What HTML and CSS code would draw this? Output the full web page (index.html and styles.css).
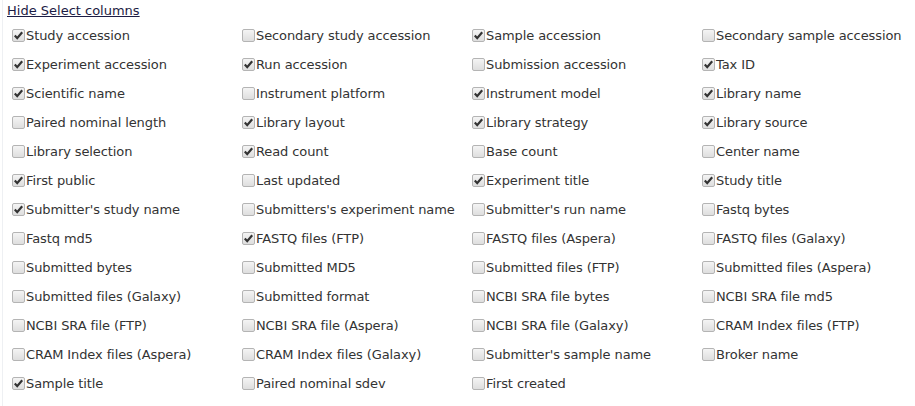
FILE: index.html
```html
<!DOCTYPE html>
<html>
<head>
<meta charset="utf-8">
<link rel="stylesheet" href="styles.css">
</head>
<body>
<div class="panel">
  <a class="toggle" href="#">Hide Select columns</a>
  <div class="grid">
    <label class="opt"><span class="box on"></span>Study accession</label>
    <label class="opt"><span class="box"></span>Secondary study accession</label>
    <label class="opt"><span class="box on"></span>Sample accession</label>
    <label class="opt"><span class="box"></span>Secondary sample accession</label>

    <label class="opt"><span class="box on"></span>Experiment accession</label>
    <label class="opt"><span class="box on"></span>Run accession</label>
    <label class="opt"><span class="box"></span>Submission accession</label>
    <label class="opt"><span class="box on"></span>Tax ID</label>

    <label class="opt"><span class="box on"></span>Scientific name</label>
    <label class="opt"><span class="box"></span>Instrument platform</label>
    <label class="opt"><span class="box on"></span>Instrument model</label>
    <label class="opt"><span class="box on"></span>Library name</label>

    <label class="opt"><span class="box"></span>Paired nominal length</label>
    <label class="opt"><span class="box on"></span>Library layout</label>
    <label class="opt"><span class="box on"></span>Library strategy</label>
    <label class="opt"><span class="box on"></span>Library source</label>

    <label class="opt"><span class="box"></span>Library selection</label>
    <label class="opt"><span class="box on"></span>Read count</label>
    <label class="opt"><span class="box"></span>Base count</label>
    <label class="opt"><span class="box"></span>Center name</label>

    <label class="opt"><span class="box on"></span>First public</label>
    <label class="opt"><span class="box"></span>Last updated</label>
    <label class="opt"><span class="box on"></span>Experiment title</label>
    <label class="opt"><span class="box on"></span>Study title</label>

    <label class="opt"><span class="box on"></span>Submitter's study name</label>
    <label class="opt"><span class="box"></span>Submitters's experiment name</label>
    <label class="opt"><span class="box"></span>Submitter's run name</label>
    <label class="opt"><span class="box"></span>Fastq bytes</label>

    <label class="opt"><span class="box"></span>Fastq md5</label>
    <label class="opt"><span class="box on"></span>FASTQ files (FTP)</label>
    <label class="opt"><span class="box"></span>FASTQ files (Aspera)</label>
    <label class="opt"><span class="box"></span>FASTQ files (Galaxy)</label>

    <label class="opt"><span class="box"></span>Submitted bytes</label>
    <label class="opt"><span class="box"></span>Submitted MD5</label>
    <label class="opt"><span class="box"></span>Submitted files (FTP)</label>
    <label class="opt"><span class="box"></span>Submitted files (Aspera)</label>

    <label class="opt"><span class="box"></span>Submitted files (Galaxy)</label>
    <label class="opt"><span class="box"></span>Submitted format</label>
    <label class="opt"><span class="box"></span>NCBI SRA file bytes</label>
    <label class="opt"><span class="box"></span>NCBI SRA file md5</label>

    <label class="opt"><span class="box"></span>NCBI SRA file (FTP)</label>
    <label class="opt"><span class="box"></span>NCBI SRA file (Aspera)</label>
    <label class="opt"><span class="box"></span>NCBI SRA file (Galaxy)</label>
    <label class="opt"><span class="box"></span>CRAM Index files (FTP)</label>

    <label class="opt"><span class="box"></span>CRAM Index files (Aspera)</label>
    <label class="opt"><span class="box"></span>CRAM Index files (Galaxy)</label>
    <label class="opt"><span class="box"></span>Submitter's sample name</label>
    <label class="opt"><span class="box"></span>Broker name</label>

    <label class="opt"><span class="box on"></span>Sample title</label>
    <label class="opt"><span class="box"></span>Paired nominal sdev</label>
    <label class="opt"><span class="box"></span>First created</label>
  </div>
</div>
</body>
</html>
```

FILE: styles.css
```css
html, body {
  margin: 0;
  padding: 0;
  background: #fff;
}
body {
  font-family: "DejaVu Sans", Verdana, sans-serif;
  font-size: 13px;
  color: #333;
}
.panel {
  margin-left: 2px;
  border-left: 1px solid #eef0f3;
  min-height: 406px;
  padding-left: 4px;
  box-sizing: border-box;
}
.toggle {
  display: inline-block;
  padding-top: 3px;
  line-height: 16px;
  color: #1c1c44;
  text-decoration: underline;
}
.grid {
  display: grid;
  grid-template-columns: repeat(4, 230px);
  grid-auto-rows: 29px;
  margin-left: 5px;
  margin-top: 2px;
}
.opt {
  display: flex;
  align-items: center;
  white-space: nowrap;
  color: #333;
  letter-spacing: -0.1px;
}
.box {
  flex: none;
  width: 13px;
  height: 13px;
  box-sizing: border-box;
  border: 1px solid #b4b4b4;
  border-radius: 2px;
  background: linear-gradient(#f4f4f4, #dedede);
  margin-right: 1px;
}
.box.on {
  background-image:
    url("data:image/svg+xml;utf8,<svg xmlns='http://www.w3.org/2000/svg' width='11' height='11' viewBox='0 0 11 11'><path d='M1.8 5.6 L4.2 8.2 L9.2 2.2' fill='none' stroke='%23333' stroke-width='2.2'/></svg>"),
    linear-gradient(#f4f4f4, #dedede);
  background-repeat: no-repeat;
}
```
